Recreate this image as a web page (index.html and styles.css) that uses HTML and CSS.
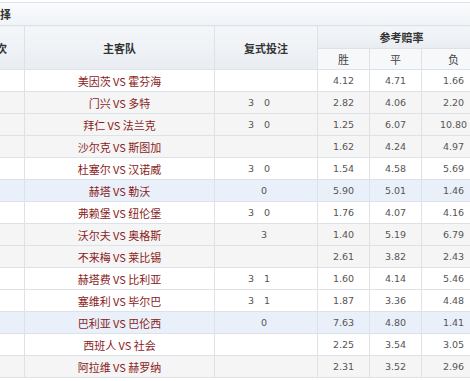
FILE: index.html
```html
<!DOCTYPE html>
<html lang="zh">
<head>
<meta charset="utf-8">
<title>选择</title>
<link rel="stylesheet" href="styles.css">
</head>
<body>
<div class="panel">
  <div class="title">选择</div>
  <table class="grid">
    <colgroup>
      <col class="c-no"><col class="c-team"><col class="c-bet"><col class="c-odd"><col class="c-odd"><col class="c-last">
    </colgroup>
    <thead>
      <tr class="h1">
        <th rowspan="2" class="no">场次</th>
        <th rowspan="2">主客队</th>
        <th rowspan="2">复式投注</th>
        <th colspan="3">参考赔率</th>
      </tr>
      <tr class="h2">
        <th class="sub">胜</th><th class="sub">平</th><th class="sub">负</th>
      </tr>
    </thead>
    <tbody>
      <tr class="w"><td></td><td class="team">美因茨 VS 霍芬海</td><td class="bet"></td><td>4.12</td><td>4.71</td><td>1.66</td></tr>
      <tr class="g"><td></td><td class="team">门兴 VS 多特</td><td class="bet"><span class="p1">3</span><span class="p3">0</span></td><td>2.82</td><td>4.06</td><td>2.20</td></tr>
      <tr class="g"><td></td><td class="team">拜仁 VS 法兰克</td><td class="bet"><span class="p1">3</span><span class="p3">0</span></td><td>1.25</td><td>6.07</td><td>10.80</td></tr>
      <tr class="g"><td></td><td class="team">沙尔克 VS 斯图加</td><td class="bet"></td><td>1.62</td><td>4.24</td><td>4.97</td></tr>
      <tr class="w"><td></td><td class="team">杜塞尔 VS 汉诺威</td><td class="bet"><span class="p1">3</span><span class="p3">0</span></td><td>1.54</td><td>4.58</td><td>5.69</td></tr>
      <tr class="b"><td></td><td class="team">赫塔 VS 勒沃</td><td class="bet"><span class="p2">0</span></td><td>5.90</td><td>5.01</td><td>1.46</td></tr>
      <tr class="w"><td></td><td class="team">弗赖堡 VS 纽伦堡</td><td class="bet"><span class="p1">3</span><span class="p3">0</span></td><td>1.76</td><td>4.07</td><td>4.16</td></tr>
      <tr class="g"><td></td><td class="team">沃尔夫 VS 奥格斯</td><td class="bet"><span class="p2">3</span></td><td>1.40</td><td>5.19</td><td>6.79</td></tr>
      <tr class="g"><td></td><td class="team">不来梅 VS 莱比锡</td><td class="bet"></td><td>2.61</td><td>3.82</td><td>2.43</td></tr>
      <tr class="w"><td></td><td class="team">赫塔费 VS 比利亚</td><td class="bet"><span class="p1">3</span><span class="p3">1</span></td><td>1.60</td><td>4.14</td><td>5.46</td></tr>
      <tr class="w"><td></td><td class="team">塞维利 VS 毕尔巴</td><td class="bet"><span class="p1">3</span><span class="p3">1</span></td><td>1.87</td><td>3.36</td><td>4.48</td></tr>
      <tr class="b"><td></td><td class="team">巴利亚 VS 巴伦西</td><td class="bet"><span class="p2">0</span></td><td>7.63</td><td>4.80</td><td>1.41</td></tr>
      <tr class="w"><td></td><td class="team">西班人 VS 社会</td><td class="bet"></td><td>2.25</td><td>3.54</td><td>3.05</td></tr>
      <tr class="g"><td></td><td class="team">阿拉维 VS 赫罗纳</td><td class="bet"></td><td>2.31</td><td>3.52</td><td>2.96</td></tr>
    </tbody>
  </table>
</div>
</body>
</html>
```
FILE: styles.css
```css
html, body {
  margin: 0;
  padding: 0;
  background: #ffffff;
}
body {
  width: 470px;
  height: 381px;
  overflow: hidden;
  font-family: "Noto Sans CJK SC", "DejaVu Sans", sans-serif;
}
.panel {
  margin-top: 2px;
  margin-left: -16px;
  width: 520px;
  border-top: 1px solid #dfe4ea;
}
.title {
  height: 22px;
  line-height: 22px;
  padding-left: 5px;
  font-size: 11px;
  font-weight: bold;
  color: #333;
  background: linear-gradient(#fafbfd, #eff3f7);
}
.grid {
  border-collapse: collapse;
  table-layout: fixed;
  width: 501px;
}
.c-no { width: 40px; }
.c-team { width: 190px; }
.c-bet { width: 103px; }
.c-odd { width: 52px; }
.c-last { width: 64px; }
.grid th, .grid td {
  border: 1px solid #dde2e8;
  padding: 0;
  text-align: center;
  overflow: hidden;
  white-space: nowrap;
}
.grid th {
  font-size: 11px;
  font-weight: bold;
  color: #333;
  background: linear-gradient(#f4f6f9, #e9edf2);
}
.grid th.no {
  text-align: right;
  padding-right: 20px;
}
.grid th.sub {
  font-weight: normal;
  color: #444;
  background: #f6f8fa;
}
.h1 { height: 23px; }
.h2 { height: 21px; }
.grid tbody tr { height: 22px; }
.grid td {
  font-family: "DejaVu Sans", sans-serif;
  font-size: 9.5px;
  color: #555;
}
.grid td.team {
  font-family: "Noto Sans CJK SC", sans-serif;
  font-size: 11px;
  color: #8a1c1c;
}
.grid td.bet {
  text-align: left;
}
.p1 { margin-left: 33px; }
.p3 { margin-left: 10px; }
.p2 { margin-left: 46px; }
tr.w td { background: #ffffff; }
tr.g td { background: #f5f5f5; }
tr.b td { background: #e9f0fa; }
```
